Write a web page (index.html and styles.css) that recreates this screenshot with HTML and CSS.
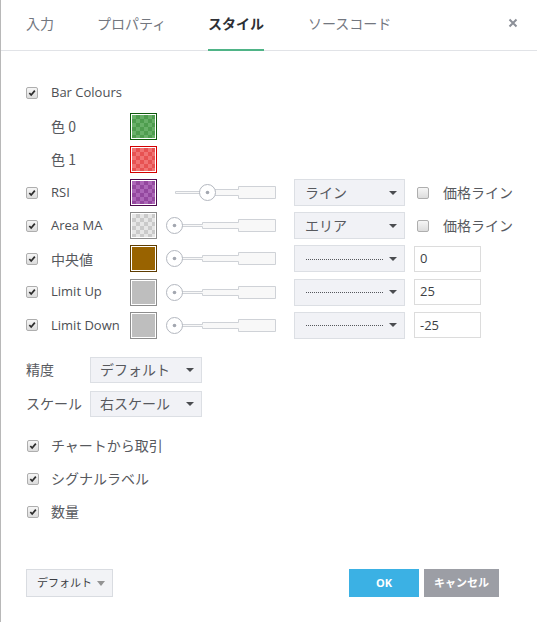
FILE: index.html
```html
<!DOCTYPE html>
<html lang="ja">
<head>
<meta charset="utf-8">
<title>スタイル</title>
<link rel="stylesheet" href="styles.css">
</head>
<body>
<div class="dialog">
  <div class="tabs">
    <div class="tab t1"><span class="tab-label">入力</span></div>
    <div class="tab t2"><span class="tab-label">プロパティ</span></div>
    <div class="tab t3"><span class="tab-label active">スタイル</span></div>
    <div class="tab t4"><span class="tab-label">ソースコード</span></div>
    <span class="close"><svg width="10" height="10" viewBox="0 0 10 10"><path d="M1.5 1.5 L8.5 8.5 M8.5 1.5 L1.5 8.5" stroke="#8c9098" stroke-width="2" fill="none"/></svg></span>
  </div>

  <div class="content">
    <div class="plots">
      <div class="row">
        <span class="cell-cb"><span class="cb checked"><svg viewBox="0 0 12 12"><path d="M2.8 6 L5 8.4 L9.4 3.2" stroke="#2d2d2d" stroke-width="2.1" fill="none"/></svg></span></span>
        <span class="label">Bar Colours</span>
      </div>
      <div class="row">
        <span class="cell-cb"></span>
        <span class="label ja">色 0</span>
        <span class="sw sw-green"></span>
      </div>
      <div class="row">
        <span class="cell-cb"></span>
        <span class="label ja">色 1</span>
        <span class="sw sw-red"></span>
      </div>
      <div class="row">
        <span class="cell-cb"><span class="cb checked"><svg viewBox="0 0 12 12"><path d="M2.8 6 L5 8.4 L9.4 3.2" stroke="#2d2d2d" stroke-width="2.1" fill="none"/></svg></span></span>
        <span class="label">RSI</span>
        <span class="sw sw-purple"></span>
        <svg class="slider" width="112" height="27" viewBox="0 0 112 27"><path d="M10.5 12.5 H37.5 V10.5 H73.5 V7.5 H110.5 V19.5 H73.5 V16.5 H37.5 V14.5 H10.5 Z" fill="#f8f8f8" stroke="#cfd2d7"/><circle cx="42.5" cy="13.5" r="8" fill="#fff" stroke="#b3b7bf"/><circle cx="42.5" cy="13.5" r="1.8" fill="#a3a7b0"/></svg>
        <div class="dd dd-style"><span class="dd-text ja">ライン</span><span class="caret"></span></div>
        <span class="cb"></span>
        <span class="after ja">価格ライン</span>
      </div>
      <div class="row">
        <span class="cell-cb"><span class="cb checked"><svg viewBox="0 0 12 12"><path d="M2.8 6 L5 8.4 L9.4 3.2" stroke="#2d2d2d" stroke-width="2.1" fill="none"/></svg></span></span>
        <span class="label">Area MA</span>
        <span class="sw sw-trans"></span>
        <svg class="slider" width="112" height="27" viewBox="0 0 112 27"><path d="M10.5 12.5 H37.5 V10.5 H73.5 V7.5 H110.5 V19.5 H73.5 V16.5 H37.5 V14.5 H10.5 Z" fill="#f8f8f8" stroke="#cfd2d7"/><circle cx="9.5" cy="13.5" r="8" fill="#fff" stroke="#b3b7bf"/><circle cx="9.5" cy="13.5" r="1.8" fill="#a3a7b0"/></svg>
        <div class="dd dd-style"><span class="dd-text ja">エリア</span><span class="caret"></span></div>
        <span class="cb"></span>
        <span class="after ja">価格ライン</span>
      </div>
      <div class="row">
        <span class="cell-cb"><span class="cb checked"><svg viewBox="0 0 12 12"><path d="M2.8 6 L5 8.4 L9.4 3.2" stroke="#2d2d2d" stroke-width="2.1" fill="none"/></svg></span></span>
        <span class="label ja">中央値</span>
        <span class="sw sw-brown"></span>
        <svg class="slider" width="112" height="27" viewBox="0 0 112 27"><path d="M10.5 12.5 H37.5 V10.5 H73.5 V7.5 H110.5 V19.5 H73.5 V16.5 H37.5 V14.5 H10.5 Z" fill="#f8f8f8" stroke="#cfd2d7"/><circle cx="9.5" cy="13.5" r="8" fill="#fff" stroke="#b3b7bf"/><circle cx="9.5" cy="13.5" r="1.8" fill="#a3a7b0"/></svg>
        <div class="dd dd-style"><span class="dotted"></span><span class="caret"></span></div>
        <span class="input">0</span>
      </div>
      <div class="row">
        <span class="cell-cb"><span class="cb checked"><svg viewBox="0 0 12 12"><path d="M2.8 6 L5 8.4 L9.4 3.2" stroke="#2d2d2d" stroke-width="2.1" fill="none"/></svg></span></span>
        <span class="label">Limit Up</span>
        <span class="sw sw-grey"></span>
        <svg class="slider" width="112" height="27" viewBox="0 0 112 27"><path d="M10.5 12.5 H37.5 V10.5 H73.5 V7.5 H110.5 V19.5 H73.5 V16.5 H37.5 V14.5 H10.5 Z" fill="#f8f8f8" stroke="#cfd2d7"/><circle cx="9.5" cy="13.5" r="8" fill="#fff" stroke="#b3b7bf"/><circle cx="9.5" cy="13.5" r="1.8" fill="#a3a7b0"/></svg>
        <div class="dd dd-style"><span class="dotted"></span><span class="caret"></span></div>
        <span class="input">25</span>
      </div>
      <div class="row">
        <span class="cell-cb"><span class="cb checked"><svg viewBox="0 0 12 12"><path d="M2.8 6 L5 8.4 L9.4 3.2" stroke="#2d2d2d" stroke-width="2.1" fill="none"/></svg></span></span>
        <span class="label">Limit Down</span>
        <span class="sw sw-grey"></span>
        <svg class="slider" width="112" height="27" viewBox="0 0 112 27"><path d="M10.5 12.5 H37.5 V10.5 H73.5 V7.5 H110.5 V19.5 H73.5 V16.5 H37.5 V14.5 H10.5 Z" fill="#f8f8f8" stroke="#cfd2d7"/><circle cx="9.5" cy="13.5" r="8" fill="#fff" stroke="#b3b7bf"/><circle cx="9.5" cy="13.5" r="1.8" fill="#a3a7b0"/></svg>
        <div class="dd dd-style"><span class="dotted"></span><span class="caret"></span></div>
        <span class="input">-25</span>
      </div>
    </div>

    <div class="selects">
      <div class="srow">
        <span class="slabel ja">精度</span>
        <div class="dd dd-small"><span class="dd-text ja">デフォルト</span><span class="caret"></span></div>
      </div>
      <div class="srow">
        <span class="slabel ja">スケール</span>
        <div class="dd dd-small"><span class="dd-text ja">右スケール</span><span class="caret"></span></div>
      </div>
    </div>

    <div class="checks">
      <div class="crow">
        <span class="cell-cb"><span class="cb checked"><svg viewBox="0 0 12 12"><path d="M2.8 6 L5 8.4 L9.4 3.2" stroke="#2d2d2d" stroke-width="2.1" fill="none"/></svg></span></span>
        <span class="ja">チャートから取引</span>
      </div>
      <div class="crow">
        <span class="cell-cb"><span class="cb checked"><svg viewBox="0 0 12 12"><path d="M2.8 6 L5 8.4 L9.4 3.2" stroke="#2d2d2d" stroke-width="2.1" fill="none"/></svg></span></span>
        <span class="ja">シグナルラベル</span>
      </div>
      <div class="crow">
        <span class="cell-cb"><span class="cb checked"><svg viewBox="0 0 12 12"><path d="M2.8 6 L5 8.4 L9.4 3.2" stroke="#2d2d2d" stroke-width="2.1" fill="none"/></svg></span></span>
        <span class="ja">数量</span>
      </div>
    </div>
  </div>

  <div class="footer">
    <div class="btn-default"><span class="ja-s">デフォルト</span><span class="caret caret-grey"></span></div>
    <div class="actions">
      <span class="btn btn-ok">OK</span>
      <span class="btn btn-cancel">キャンセル</span>
    </div>
  </div>
</div>
</body>
</html>
```

FILE: styles.css
```css
* { box-sizing: border-box; }

html, body {
  margin: 0;
  padding: 0;
  background: #fff;
}

body {
  font-family: "Open Sans", "Noto Sans CJK JP", sans-serif;
  font-size: 13px;
  color: #4d4f54;
  line-height: 1.2;
}

.ja {
  font-family: "Noto Sans CJK JP", sans-serif;
  font-size: 14px;
  color: #57595e;
}

.dialog {
  width: 537px;
  height: 622px;
  border-left: 1px solid #b8b8b8;
  display: flex;
  flex-direction: column;
}

/* Tabs */
.tabs {
  height: 51px;
  border-bottom: 1px solid #e1e3e7;
  display: flex;
  align-items: stretch;
  padding-left: 25px;
  font-family: "Noto Sans CJK JP", sans-serif;
  font-size: 14px;
  color: #73777f;
}

.tab { display: flex; }
.t1 { width: 71px; }
.t2 { width: 111px; }
.t3 { width: 100px; }
.t4 { width: 100px; }

.tab-label {
  display: flex;
  align-items: center;
  padding-bottom: 3px;
  margin-bottom: -1px;
  border-bottom: 2px solid transparent;
}

.tab-label.active {
  color: #2e3035;
  font-weight: 700;
  border-bottom-color: #4fb487;
}

.close {
  margin-left: auto;
  margin-right: 19px;
  display: flex;
  align-items: center;
  padding-bottom: 5px;
}

/* Content */
.content {
  padding-left: 25px;
}

.plots {
  margin-top: 28.5px;
  display: flex;
  flex-direction: column;
  gap: 6.2px;
}

.row {
  height: 27px;
  display: flex;
  align-items: center;
}

.cell-cb {
  width: 25px;
  flex: none;
  display: flex;
  align-items: center;
}

.cb {
  width: 12px;
  height: 12px;
  flex: none;
  border: 1px solid #aeaeae;
  border-radius: 2px;
  background: linear-gradient(#f6f6f6, #dcdcdc);
  display: inline-flex;
}

.cb svg {
  width: 10px;
  height: 10px;
}

.label {
  width: 79px;
  flex: none;
  white-space: nowrap;
}

.sw {
  width: 27px;
  height: 27px;
  flex: none;
  border: 1px solid #888;
  box-shadow: inset 0 0 0 1px #fff;
}

.sw-green {
  border-color: #0d5a0d;
  background: repeating-conic-gradient(#4f9d4f 0 25%, #68b068 0 50%) 1px 1px / 8px 8px;
}
.sw-red {
  border-color: #d30000;
  background: repeating-conic-gradient(#e75252 0 25%, #f07373 0 50%) 1px 1px / 8px 8px;
}
.sw-purple {
  border-color: #4d0b4f;
  background: repeating-conic-gradient(#94489f 0 25%, #ac66b7 0 50%) 1px 1px / 8px 8px;
}
.sw-trans {
  border-color: #8c8c8c;
  background: repeating-conic-gradient(#cacaca 0 25%, #e6e6e6 0 50%) 1px 1px / 8px 8px;
}
.sw-brown {
  border-color: #5e3c00;
  background: #996300;
}
.sw-grey {
  border-color: #8d8d8d;
  background: #bebebe;
}

.slider {
  margin-left: 8px;
  flex: none;
  display: block;
}

.dd {
  height: 27px;
  flex: none;
  background: #f1f2f6;
  border: 1px solid #dcdfe4;
  display: flex;
  align-items: center;
  padding: 0 6px 0 10px;
  color: #4d4f54;
}

.dd-style {
  width: 111px;
  margin-left: 17px;
}

.dd-text {
  flex: 1;
  white-space: nowrap;
}

.dotted {
  flex: none;
  width: 77px;
  margin-right: auto;
  margin-left: 1px;
  border-bottom: 1px dotted #55575c;
  margin-top: 1px;
}

.caret {
  width: 0;
  height: 0;
  flex: none;
  border-left: 4px solid transparent;
  border-right: 4px solid transparent;
  border-top: 4px solid #4a4c50;
  margin-right: 1px;
}

.row > .cb {
  margin-left: 12px;
}

.after {
  margin-left: 14px;
  white-space: nowrap;
}

.input {
  width: 67px;
  height: 26px;
  margin-left: 9px;
  border: 1px solid #dcdcdc;
  background: #fff;
  display: flex;
  align-items: center;
  padding-left: 5px;
  color: #3d3f44;
}

/* Selects */
.selects {
  margin-top: 18px;
  display: flex;
  flex-direction: column;
  gap: 8px;
}

.srow {
  height: 26px;
  display: flex;
  align-items: center;
}

.slabel {
  width: 64px;
  flex: none;
  white-space: nowrap;
}

.dd-small {
  width: 112px;
  height: 26px;
  padding-left: 9px;
}

/* Checks */
.checks {
  margin-top: 19px;
  display: flex;
  flex-direction: column;
  gap: 13px;
}

.crow {
  height: 20px;
  display: flex;
  align-items: center;
}

.crow .cb { margin-left: 1px; }

/* Footer */
.footer {
  margin-top: auto;
  padding: 0 38px 25px 25px;
  display: flex;
  align-items: center;
  justify-content: space-between;
}

.btn-default {
  width: 87px;
  height: 28px;
  background: #f2f3f6;
  border: 1px solid #d9dce1;
  display: flex;
  align-items: center;
  padding: 0 7px 0 10px;
  color: #3b3d42;
}

.ja-s {
  font-family: "Noto Sans CJK JP", sans-serif;
  font-size: 11px;
  flex: 1;
  white-space: nowrap;
}

.caret-grey {
  border-left-width: 4px;
  border-right-width: 4px;
  border-top: 5px solid #939393;
  margin-right: 0;
}

.actions {
  display: flex;
  gap: 5px;
}

.btn {
  height: 28px;
  display: flex;
  align-items: center;
  justify-content: center;
  color: #fff;
  font-family: "Noto Sans CJK JP", sans-serif;
  font-weight: 700;
  font-size: 11px;
}

.btn-ok {
  width: 70px;
  background: #3bb1e4;
  font-family: "Open Sans", sans-serif;
  font-size: 11px;
}

.btn-cancel {
  width: 75px;
  background: #9c9ea5;
}
```
